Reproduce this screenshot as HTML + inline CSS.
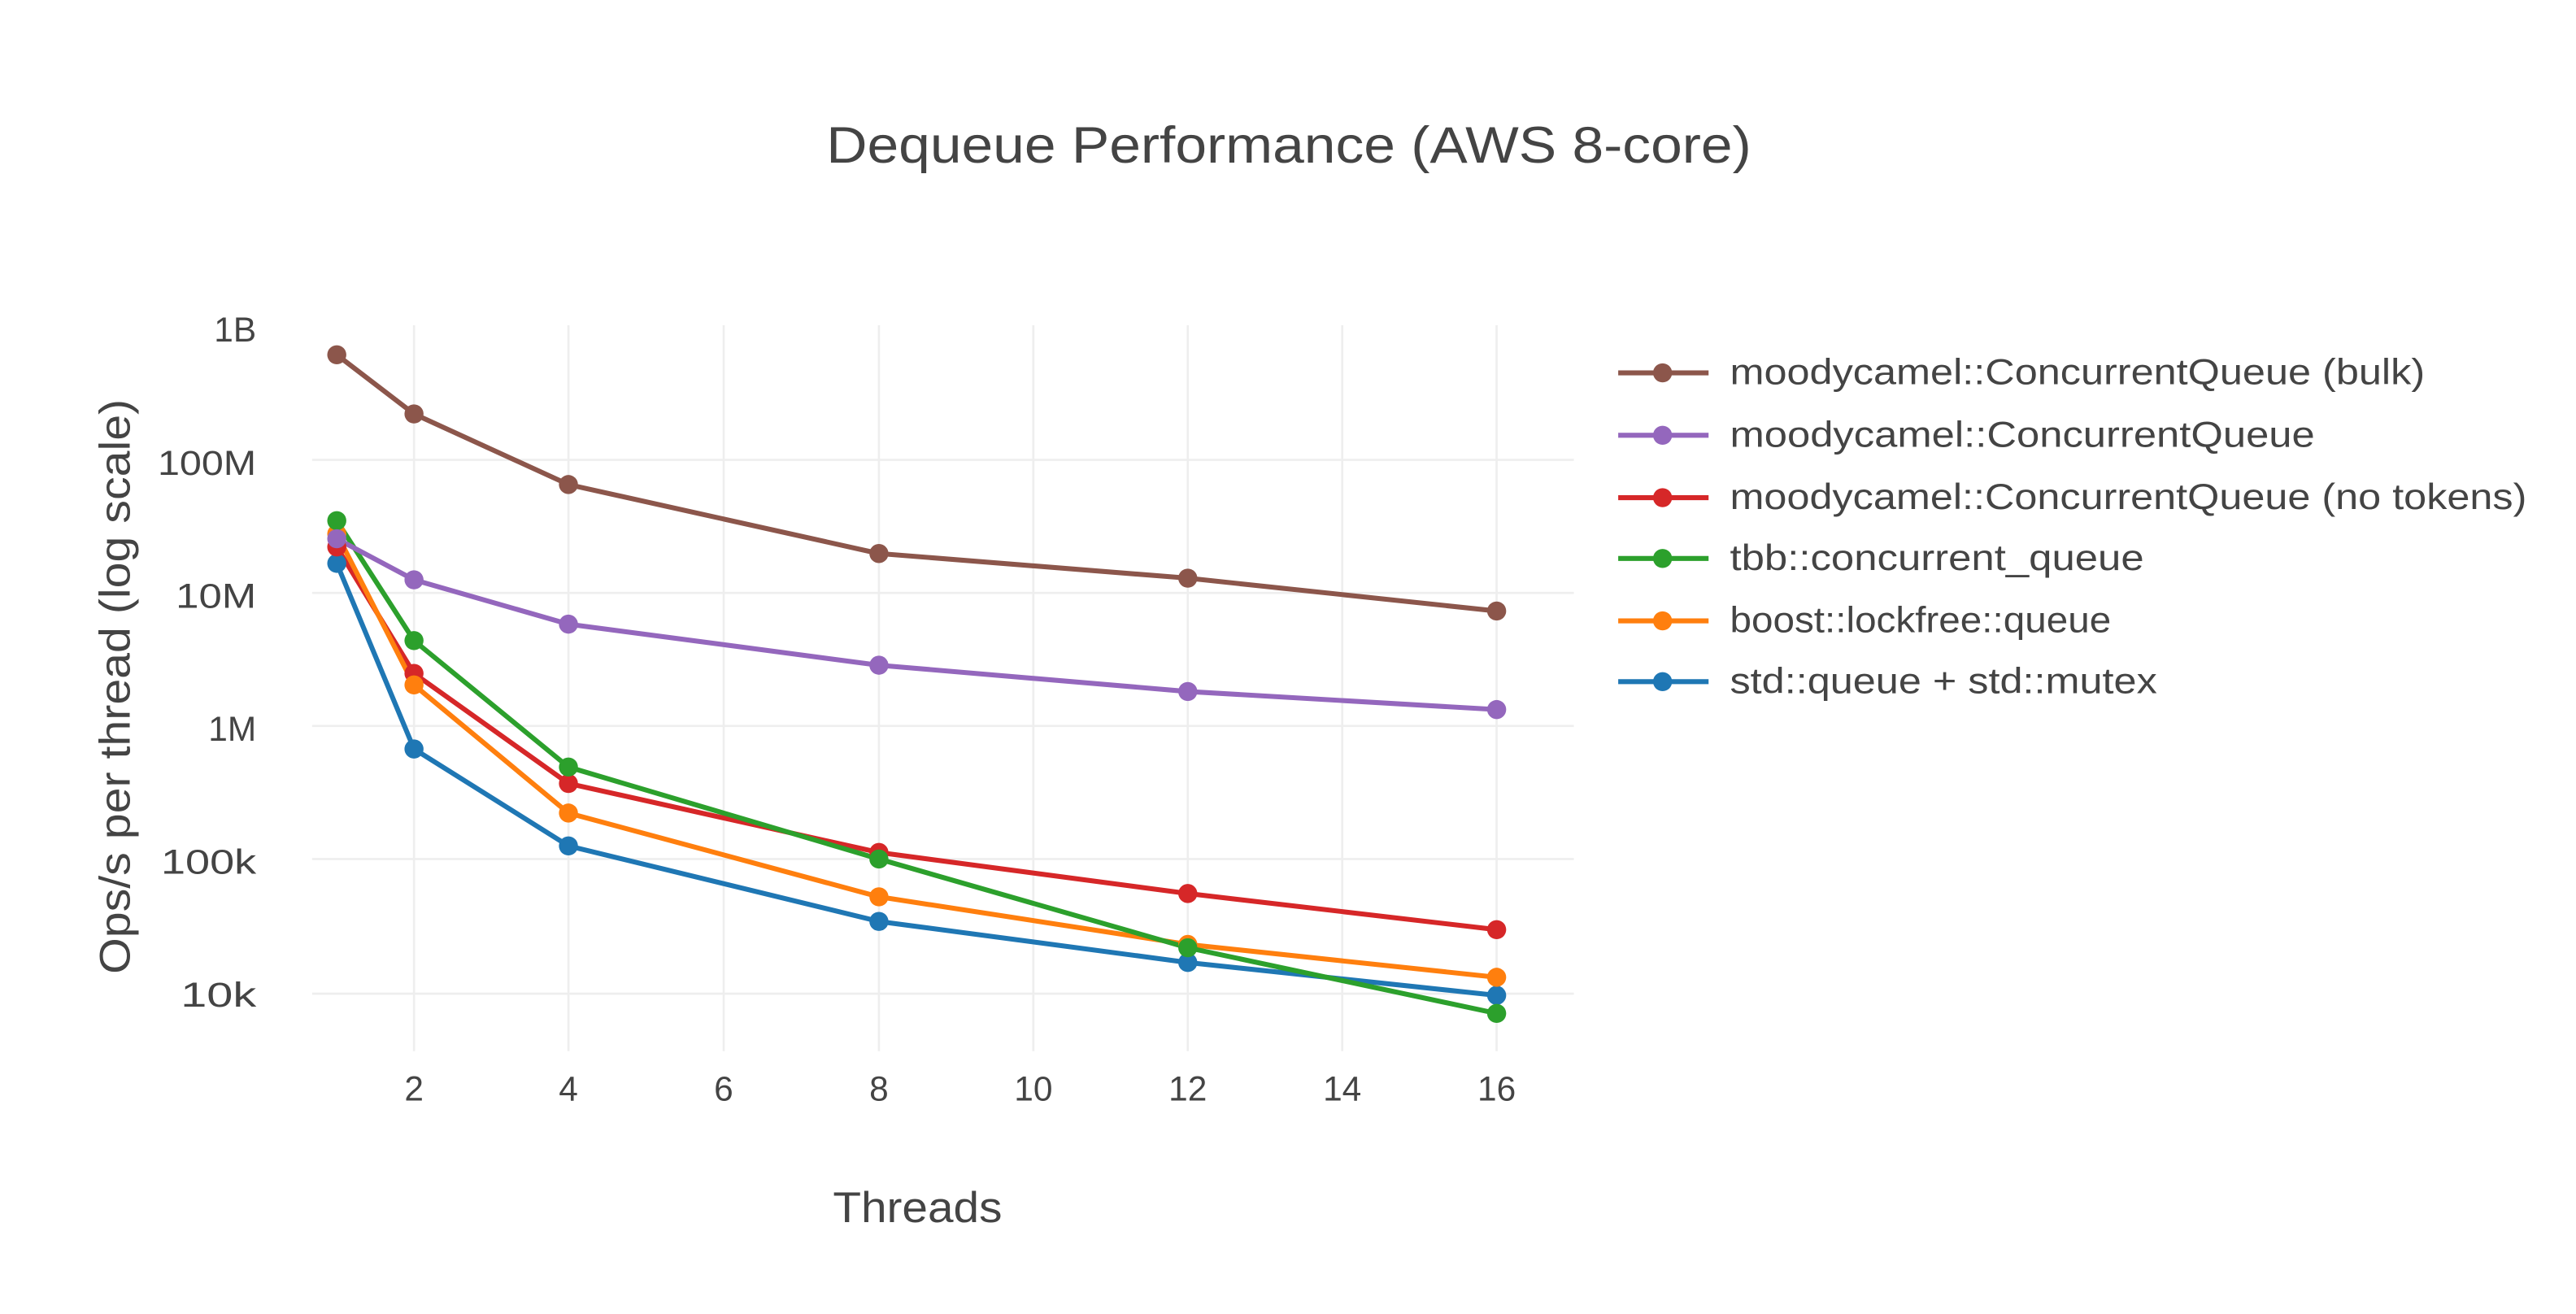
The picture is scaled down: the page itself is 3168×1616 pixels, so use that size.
<!DOCTYPE html>
<html><head><meta charset="utf-8"><style>
html,body{margin:0;padding:0;background:#fff;}
svg{display:block;}
text{font-family:"Liberation Sans","DejaVu Sans",sans-serif;fill:#444;}
</style></head><body>
<svg width="3168" height="1616" viewBox="0 0 1568 800" preserveAspectRatio="none" xmlns="http://www.w3.org/2000/svg">
<rect width="1568" height="800" fill="#fff"/>
<g stroke="#eeeeee" stroke-width="1.3">
<line x1="252" y1="198" x2="252" y2="640"/>
<line x1="346" y1="198" x2="346" y2="640"/>
<line x1="440.5" y1="198" x2="440.5" y2="640"/>
<line x1="535" y1="198" x2="535" y2="640"/>
<line x1="629" y1="198" x2="629" y2="640"/>
<line x1="723" y1="198" x2="723" y2="640"/>
<line x1="817" y1="198" x2="817" y2="640"/>
<line x1="911" y1="198" x2="911" y2="640"/>
<line x1="190" y1="280" x2="958" y2="280"/>
<line x1="190" y1="361" x2="958" y2="361"/>
<line x1="190" y1="442" x2="958" y2="442"/>
<line x1="190" y1="523" x2="958" y2="523"/>
<line x1="190" y1="605" x2="958" y2="605"/>
</g>
<text x="503" y="99" font-size="31" textLength="563" lengthAdjust="spacingAndGlyphs">Dequeue Performance (AWS 8-core)</text>
<g font-size="21" text-anchor="end">
<text x="156" y="208">1B</text>
<text x="156" y="289" textLength="60" lengthAdjust="spacingAndGlyphs">100M</text>
<text x="156" y="370" textLength="49" lengthAdjust="spacingAndGlyphs">10M</text>
<text x="156" y="451">1M</text>
<text x="156" y="532" textLength="58" lengthAdjust="spacingAndGlyphs">100k</text>
<text x="156" y="613" textLength="46" lengthAdjust="spacingAndGlyphs">10k</text>
</g>
<g font-size="21" text-anchor="middle">
<text x="252" y="670">2</text><text x="346" y="670">4</text><text x="440.5" y="670">6</text>
<text x="535" y="670">8</text><text x="629" y="670">10</text><text x="723" y="670">12</text>
<text x="817" y="670">14</text><text x="911" y="670">16</text>
</g>
<text x="507" y="744" font-size="26" textLength="103" lengthAdjust="spacingAndGlyphs">Threads</text>
<text transform="translate(79,593) rotate(-90)" font-size="26" textLength="350" lengthAdjust="spacingAndGlyphs">Ops/s per thread (log scale)</text>
<g fill="none" stroke-width="3" stroke-linejoin="round">
<polyline stroke="#1f77b4" points="205,343 252,456 346,515 535,561 723,586 911,606"/>
<polyline stroke="#d62728" points="205,333 252,410 346,477 535,519 723,544 911,566"/>
<polyline stroke="#ff7f0e" points="205,325 252,417 346,495 535,546 723,575 911,595"/>
<polyline stroke="#2ca02c" points="205,317 252,390 346,467 535,523 723,577 911,617"/>
<polyline stroke="#9467bd" points="205,328 252,353 346,380 535,405 723,421 911,432"/>
<polyline stroke="#8c564b" points="205,216 252,252 346,295 535,337 723,352 911,372"/>
</g>
<g fill="#1f77b4"><circle cx="205" cy="343" r="5.8"/><circle cx="252" cy="456" r="5.8"/><circle cx="346" cy="515" r="5.8"/><circle cx="535" cy="561" r="5.8"/><circle cx="723" cy="586" r="5.8"/><circle cx="911" cy="606" r="5.8"/></g>
<g fill="#d62728"><circle cx="205" cy="333" r="5.8"/><circle cx="252" cy="410" r="5.8"/><circle cx="346" cy="477" r="5.8"/><circle cx="535" cy="519" r="5.8"/><circle cx="723" cy="544" r="5.8"/><circle cx="911" cy="566" r="5.8"/></g>
<g fill="#ff7f0e"><circle cx="205" cy="325" r="5.8"/><circle cx="252" cy="417" r="5.8"/><circle cx="346" cy="495" r="5.8"/><circle cx="535" cy="546" r="5.8"/><circle cx="723" cy="575" r="5.8"/><circle cx="911" cy="595" r="5.8"/></g>
<g fill="#2ca02c"><circle cx="205" cy="317" r="5.8"/><circle cx="252" cy="390" r="5.8"/><circle cx="346" cy="467" r="5.8"/><circle cx="535" cy="523" r="5.8"/><circle cx="723" cy="577" r="5.8"/><circle cx="911" cy="617" r="5.8"/></g>
<g fill="#9467bd"><circle cx="205" cy="328" r="5.8"/><circle cx="252" cy="353" r="5.8"/><circle cx="346" cy="380" r="5.8"/><circle cx="535" cy="405" r="5.8"/><circle cx="723" cy="421" r="5.8"/><circle cx="911" cy="432" r="5.8"/></g>
<g fill="#8c564b"><circle cx="205" cy="216" r="5.8"/><circle cx="252" cy="252" r="5.8"/><circle cx="346" cy="295" r="5.8"/><circle cx="535" cy="337" r="5.8"/><circle cx="723" cy="352" r="5.8"/><circle cx="911" cy="372" r="5.8"/></g>
<g stroke-width="3">
<line x1="985" y1="227" x2="1040" y2="227" stroke="#8c564b"/><circle cx="1012" cy="227" r="5.8" fill="#8c564b"/>
<line x1="985" y1="265" x2="1040" y2="265" stroke="#9467bd"/><circle cx="1012" cy="265" r="5.8" fill="#9467bd"/>
<line x1="985" y1="303" x2="1040" y2="303" stroke="#d62728"/><circle cx="1012" cy="303" r="5.8" fill="#d62728"/>
<line x1="985" y1="340" x2="1040" y2="340" stroke="#2ca02c"/><circle cx="1012" cy="340" r="5.8" fill="#2ca02c"/>
<line x1="985" y1="378" x2="1040" y2="378" stroke="#ff7f0e"/><circle cx="1012" cy="378" r="5.8" fill="#ff7f0e"/>
<line x1="985" y1="415" x2="1040" y2="415" stroke="#1f77b4"/><circle cx="1012" cy="415" r="5.8" fill="#1f77b4"/>
</g>
<g font-size="22">
<text x="1053" y="234" textLength="423" lengthAdjust="spacingAndGlyphs">moodycamel::ConcurrentQueue (bulk)</text>
<text x="1053" y="272" textLength="356" lengthAdjust="spacingAndGlyphs">moodycamel::ConcurrentQueue</text>
<text x="1053" y="310" textLength="485" lengthAdjust="spacingAndGlyphs">moodycamel::ConcurrentQueue (no tokens)</text>
<text x="1053" y="347" textLength="252" lengthAdjust="spacingAndGlyphs">tbb::concurrent_queue</text>
<text x="1053" y="385" textLength="232" lengthAdjust="spacingAndGlyphs">boost::lockfree::queue</text>
<text x="1053" y="422" textLength="260" lengthAdjust="spacingAndGlyphs">std::queue + std::mutex</text>
</g>
</svg>
</body></html>
